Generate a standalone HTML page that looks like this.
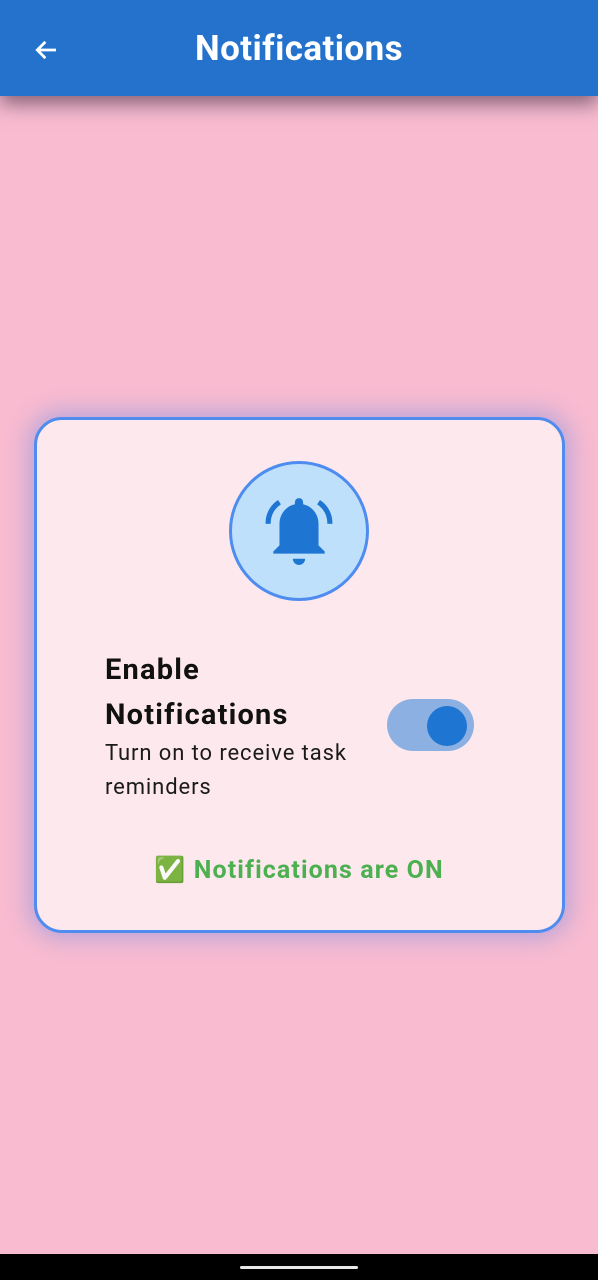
<!DOCTYPE html>
<html><head><meta charset="utf-8"><style>
body{margin:0;width:598px;height:1280px;background:#f8bbd0;position:relative;overflow:hidden;font-family:"Roboto","Liberation Sans",sans-serif;}
.bar{position:absolute;left:0;top:0;width:598px;height:96px;background:#2472cc;box-shadow:0 8px 18px rgba(60,40,60,.6);z-index:2}
.bar h1{margin:0;position:absolute;left:0;right:0;top:28px;text-align:center;color:#fff;font-size:35px;font-weight:bold;line-height:42px;letter-spacing:0.4px}
.card{position:absolute;left:34px;top:417px;width:525px;height:510px;border:3px solid #4f8cf0;border-radius:28px;background:#fde9ed;box-shadow:0 0 22px 6px rgba(110,140,230,.45)}
.circ{position:absolute;left:229px;top:461px;width:134px;height:134px;border-radius:50%;background:#bfe0fb;border:3px solid #4f8cf0}
.t1{position:absolute;left:105px;top:648px;font-size:29px;font-weight:bold;line-height:45px;color:#111;letter-spacing:1.2px}
.t2{position:absolute;left:105px;top:737px;font-size:22px;line-height:34px;color:#1a1a1a;letter-spacing:0.9px}
.sw{position:absolute;left:387px;top:699px;width:87px;height:52px;border-radius:26px;background:#8cb0e2}
.knob{position:absolute;left:427px;top:706px;width:40px;height:40px;border-radius:50%;background:#1f75d2}
.on{position:absolute;left:0;width:598px;top:854px;text-align:center;font-size:25px;font-weight:bold;color:#4caf50;line-height:34px;letter-spacing:1.1px}
.nav{position:absolute;left:0;top:1254px;width:598px;height:26px;background:#000}
.h{position:absolute;left:240px;top:1266px;width:118px;height:3px;background:#e8e8e8;border-radius:2px}
</style></head><body>
<div class="bar">
<svg style="position:absolute;left:31px;top:35px" width="30" height="30" viewBox="0 0 24 24"><path d="M20 12H5M11.5 5.5L5 12l6.5 6.5" stroke="#fff" stroke-width="2.2" fill="none"/></svg>
<h1>Notifications</h1></div>
<div class="card"></div>
<div class="circ"></div>
<svg style="position:absolute;left:262px;top:495px" width="74" height="74" viewBox="0 0 72 72">
<path d="M36 3a4 4 0 0 1 4 4v2c9 2 15 10 15 19v21l6 6v2H11v-2l6-6V28c0-9 6-17 15-19V7a4 4 0 0 1 4-4z" fill="#1f75d2"/>
<path d="M30 62h12a6 6 0 0 1-12 0z" fill="#1f75d2"/>
<path d="M17 7A24 24 0 0 0 6 28" stroke="#1f75d2" stroke-width="5" fill="none"/>
<path d="M55 7A24 24 0 0 1 66 28" stroke="#1f75d2" stroke-width="5" fill="none"/>
</svg>
<div class="t1">Enable<br>Notifications</div>
<div class="t2">Turn on to receive task<br>reminders</div>
<div class="sw"></div><div class="knob"></div>
<div class="on">✅ Notifications are ON</div>
<div class="nav"></div><div class="h"></div>
</body></html>
